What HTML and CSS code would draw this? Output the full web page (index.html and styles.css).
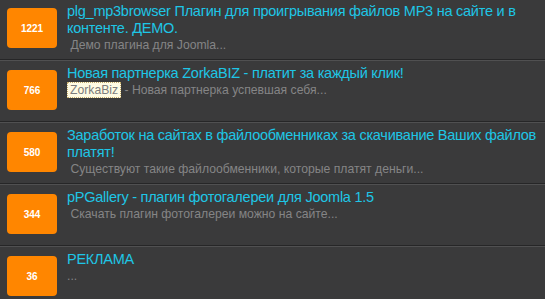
FILE: index.html
```html
<!DOCTYPE html>
<html>
<head>
  <meta charset="utf-8">
  <title>Популярное</title>
  <link rel="stylesheet" href="styles.css">
</head>

<body>
    <div class="list">
        <div class="row">
            <div class="hits">1221</div>
            <div class="info">
                <a class="title" href="#">plg_mp3browser Плагин для проигрывания файлов MP3 на сайте и в контенте. ДЕМО.</a>
                <div class="desc">&nbsp;Демо плагина для Joomla...</div>
            </div>
        </div>
        <div class="row">
            <div class="hits">766</div>
            <div class="info">
                <a class="title" href="#">Новая партнерка ZorkaBIZ - платит за каждый клик!</a>
                <div class="desc"><span class="tag">ZorkaBiz</span> - Новая партнерка успевшая себя...</div>
            </div>
        </div>
        <div class="row">
            <div class="hits">580</div>
            <div class="info">
                <a class="title" href="#">Заработок на сайтах в файлообменниках за скачивание Ваших файлов платят!</a>
                <div class="desc">&nbsp;Существуют такие файлообменники, которые платят деньги...</div>
            </div>
        </div>
        <div class="row">
            <div class="hits">344</div>
            <div class="info">
                <a class="title" href="#">pPGallery - плагин фотогалереи для Joomla 1.5</a>
                <div class="desc">&nbsp;Скачать плагин фотогалереи можно на сайте...</div>
            </div>
        </div>
        <div class="row">
            <div class="hits">36</div>
            <div class="info">
                <a class="title" href="#">РЕКЛАМА</a>
                <div class="desc">...</div>
            </div>
        </div>
    </div>
</body>
</html>
```

FILE: styles.css
```css
* {
    font-family: "Liberation Sans", Arial, sans-serif;
}

body {
    margin: 0;
    background-color: #3a3a3b;
    overflow: hidden;
}

.list {
    margin-top: -2px;
}

.row {
    display: flex;
    align-items: flex-start;
    box-sizing: border-box;
    height: 62px;
    padding: 4px 0 0 7px;
    border-top: 1px solid #505051;
    border-bottom: 1px solid #262627;
}

.hits {
    flex: none;
    width: 50px;
    height: 40px;
    margin-top: 5px;
    border-radius: 4px;
    background-color: #ff8600;
    color: #fff;
    font-size: 10px;
    font-weight: bold;
    display: flex;
    align-items: center;
    justify-content: center;
}

.info {
    margin-left: 10px;
    min-width: 0;
}

.title {
    display: block;
    color: #1ec6e6;
    font-size: 14.5px;
    letter-spacing: -0.25px;
    line-height: 17px;
    text-decoration: none;
}

.desc {
    color: #858586;
    font-size: 12.2px;
    line-height: 14px;
    margin-top: 1px;
}

.tag {
    background-color: #fffbe3;
    color: #7c7c7c;
    border: 1px dotted #c2aa6a;
    padding: 0 2px;
}
```
